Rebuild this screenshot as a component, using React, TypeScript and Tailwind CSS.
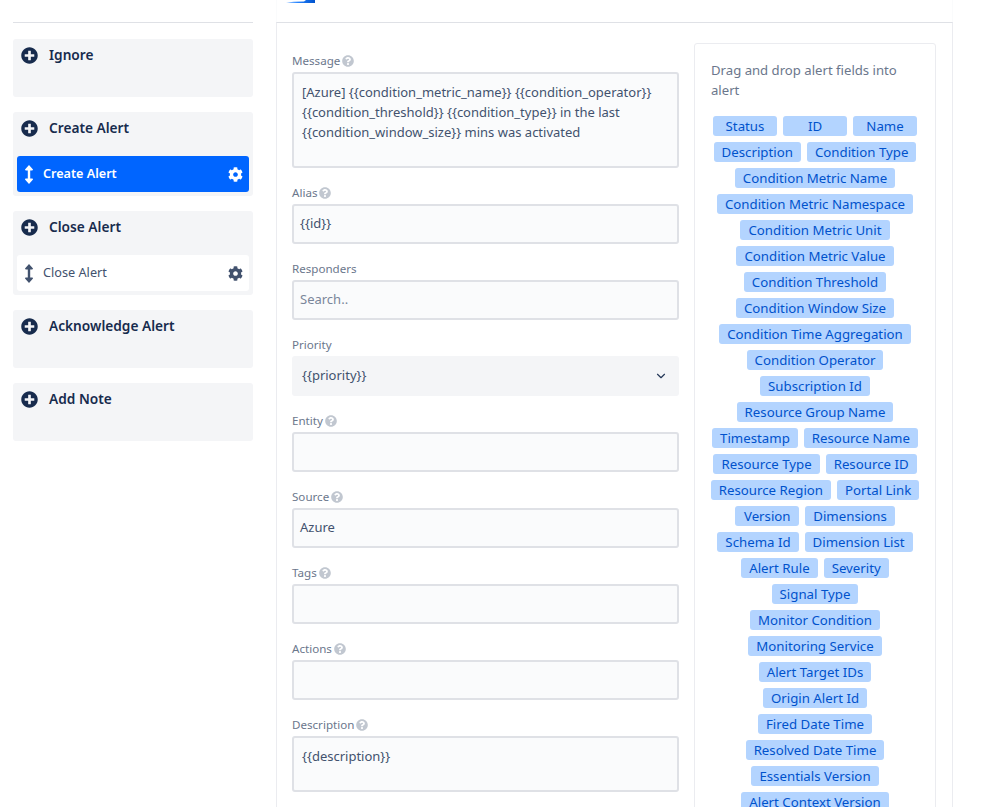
import React from "react";
import { FaPlusCircle, FaCog, FaQuestionCircle } from "react-icons/fa";
import { ChevronDown } from "lucide-react";

const FONT = "font-['Noto_Sans','Open_Sans',sans-serif]";

const fieldNames = [
  "Status",
  "ID",
  "Name",
  "Description",
  "Condition Type",
  "Condition Metric Name",
  "Condition Metric Namespace",
  "Condition Metric Unit",
  "Condition Metric Value",
  "Condition Threshold",
  "Condition Window Size",
  "Condition Time Aggregation",
  "Condition Operator",
  "Subscription Id",
  "Resource Group Name",
  "Timestamp",
  "Resource Name",
  "Resource Type",
  "Resource ID",
  "Resource Region",
  "Portal Link",
  "Version",
  "Dimensions",
  "Schema Id",
  "Dimension List",
  "Alert Rule",
  "Severity",
  "Signal Type",
  "Monitor Condition",
  "Monitoring Service",
  "Alert Target IDs",
  "Origin Alert Id",
  "Fired Date Time",
  "Resolved Date Time",
  "Essentials Version",
  "Alert Context Version",
];

function DragArrow() {
  return (
    <svg width="8" height="19" viewBox="0 0 8 19" className="shrink-0" fill="currentColor">
      <path d="M4 0 L8 4.6 Q8 5.4 7.2 5.4 H5.2 V13.6 H7.2 Q8 13.6 8 14.4 L4 19 L0 14.4 Q0 13.6 0.8 13.6 H2.8 V5.4 H0.8 Q0 5.4 0 4.6 Z" />
    </svg>
  );
}

function ActionGroup({ title, rule, active }: { title: string; rule?: string; active?: boolean }) {
  return (
    <div className="bg-[#f4f5f7] rounded-[3px] px-1 pb-1 min-h-[58px]">
      <div className="h-[32px] flex items-center gap-[11px] pl-1 text-[#172b4d]">
        <FaPlusCircle size={17} />
        <span className="text-[13.7px] font-semibold leading-5">{title}</span>
      </div>
      {rule && (
        <div
          className={`h-9 mt-[12px] rounded-[3px] flex items-center pl-2 pr-[6px] ${
            active ? "bg-[#0065ff] text-white" : "bg-white text-[#42526e]"
          }`}
        >
          <DragArrow />
          <span className={`ml-[10px] flex-1 ${active ? "text-[12.6px] font-semibold" : "text-[12.7px]"}`}>{rule}</span>
          <FaCog size={15} className="shrink-0" />
        </div>
      )}
    </div>
  );
}

function FieldLabel({ text, help = true }: { text: string; help?: boolean }) {
  return (
    <div className="h-[22px] flex items-center gap-[2px] text-[11.6px] text-[#6b778c]">
      <span>{text}</span>
      {help && <FaQuestionCircle size={12} className="text-[#c1c7d0]" />}
    </div>
  );
}

function TextField({ label, value, placeholder, help }: { label: string; value?: string; placeholder?: string; help?: boolean }) {
  return (
    <div className="mb-[14px]">
      <FieldLabel text={label} help={help} />
      <div className="h-10 border-2 border-[#dfe1e6] rounded-[3px] bg-[#fafbfc] flex items-center px-[6px] text-[13px]">
        <span className={placeholder ? "text-[#7a869a]" : "text-[#42526e]"}>{value || placeholder}</span>
      </div>
    </div>
  );
}

function TextBlock({ label, height, children }: { label: string; height: string; children: React.ReactNode }) {
  return (
    <div className="mb-[14px]">
      <FieldLabel text={label} />
      <div className={`${height} border-2 border-[#dfe1e6] rounded-[3px] bg-[#fafbfc] px-2 pt-2 text-[13px] leading-5 text-[#42526e]`}>
        {children}
      </div>
    </div>
  );
}

export default function App() {
  return (
    <div className={`${FONT} w-[990px] h-[807px] overflow-hidden bg-white flex`}>
      <aside className="w-[240px] ml-[13px] pt-[22px] shrink-0">
        <div className="border-t border-[#dfe1e6] pt-4 flex flex-col gap-[15px]">
          <ActionGroup title="Ignore" />
          <ActionGroup title="Create Alert" rule="Create Alert" active />
          <ActionGroup title="Close Alert" rule="Close Alert" />
          <ActionGroup title="Acknowledge Alert" />
          <ActionGroup title="Add Note" />
        </div>
      </aside>

      <main className="ml-[23px] w-[677px] shrink-0">
        <div className="h-[22px] pl-[9px] border-x border-[#fafbfc]">
          <svg width="32" height="4" viewBox="0 0 32 4" className="block">
            <defs>
              <linearGradient id="logo-fade" x1="0" x2="1" y1="0" y2="0">
                <stop offset="0" stopColor="#4c9aff" stopOpacity="0.5" />
                <stop offset="0.4" stopColor="#2684ff" />
                <stop offset="1" stopColor="#0052cc" />
              </linearGradient>
            </defs>
            <path d="M0 3 Q6 1.6 18 1.6 L20 0 H29 V3 Z" fill="url(#logo-fade)" />
          </svg>
        </div>
        <div className="border border-[#dfe1e6] border-b-0 border-x-[#ebecf0] h-[800px] flex pl-[15px] pt-[27px]">
          <form className="w-[387px] shrink-0">
            <TextBlock label="Message" height="h-[96px]">
              [Azure] {"{{condition_metric_name}}"} {"{{condition_operator}}"} {"{{condition_threshold}}"}{" "}
              {"{{condition_type}}"} in the last {"{{condition_window_size}}"} mins was activated
            </TextBlock>
            <TextField label="Alias" value="{{id}}" />
            <TextField label="Responders" placeholder="Search.." help={false} />
            <div className="mb-[14px]">
              <FieldLabel text="Priority" help={false} />
              <div className="h-10 rounded-[3px] bg-[#f4f5f7] flex items-center justify-between pl-[10px] pr-[11px] text-[13px] text-[#42526e]">
                <span>{"{{priority}}"}</span>
                <ChevronDown size={14} strokeWidth={2} className="text-[#253858]" />
              </div>
            </div>
            <TextField label="Entity" />
            <TextField label="Source" value="Azure" />
            <TextField label="Tags" />
            <TextField label="Actions" />
            <TextBlock label="Description" height="h-[56px]">
              {"{{description}}"}
            </TextBlock>
          </form>

          <div className="ml-[15px] mt-[-7px] w-[242px] h-[800px] border border-[#ebecf0] rounded-[3px] px-4 pt-4 shrink-0">
            <p className="text-[13.15px] leading-5 text-[#6b778c] pb-4">Drag and drop alert fields into alert</p>
            <div className="flex flex-wrap justify-center gap-[6px] -mx-[1px]">
              {fieldNames.map((name) => (
                <span
                  key={name}
                  className="h-5 min-w-[64px] px-2 rounded-[3px] bg-[#b3d4ff] text-[#0052cc] text-[13.25px] leading-5 text-center whitespace-nowrap"
                >
                  {name}
                </span>
              ))}
            </div>
          </div>
        </div>
      </main>
    </div>
  );
}
